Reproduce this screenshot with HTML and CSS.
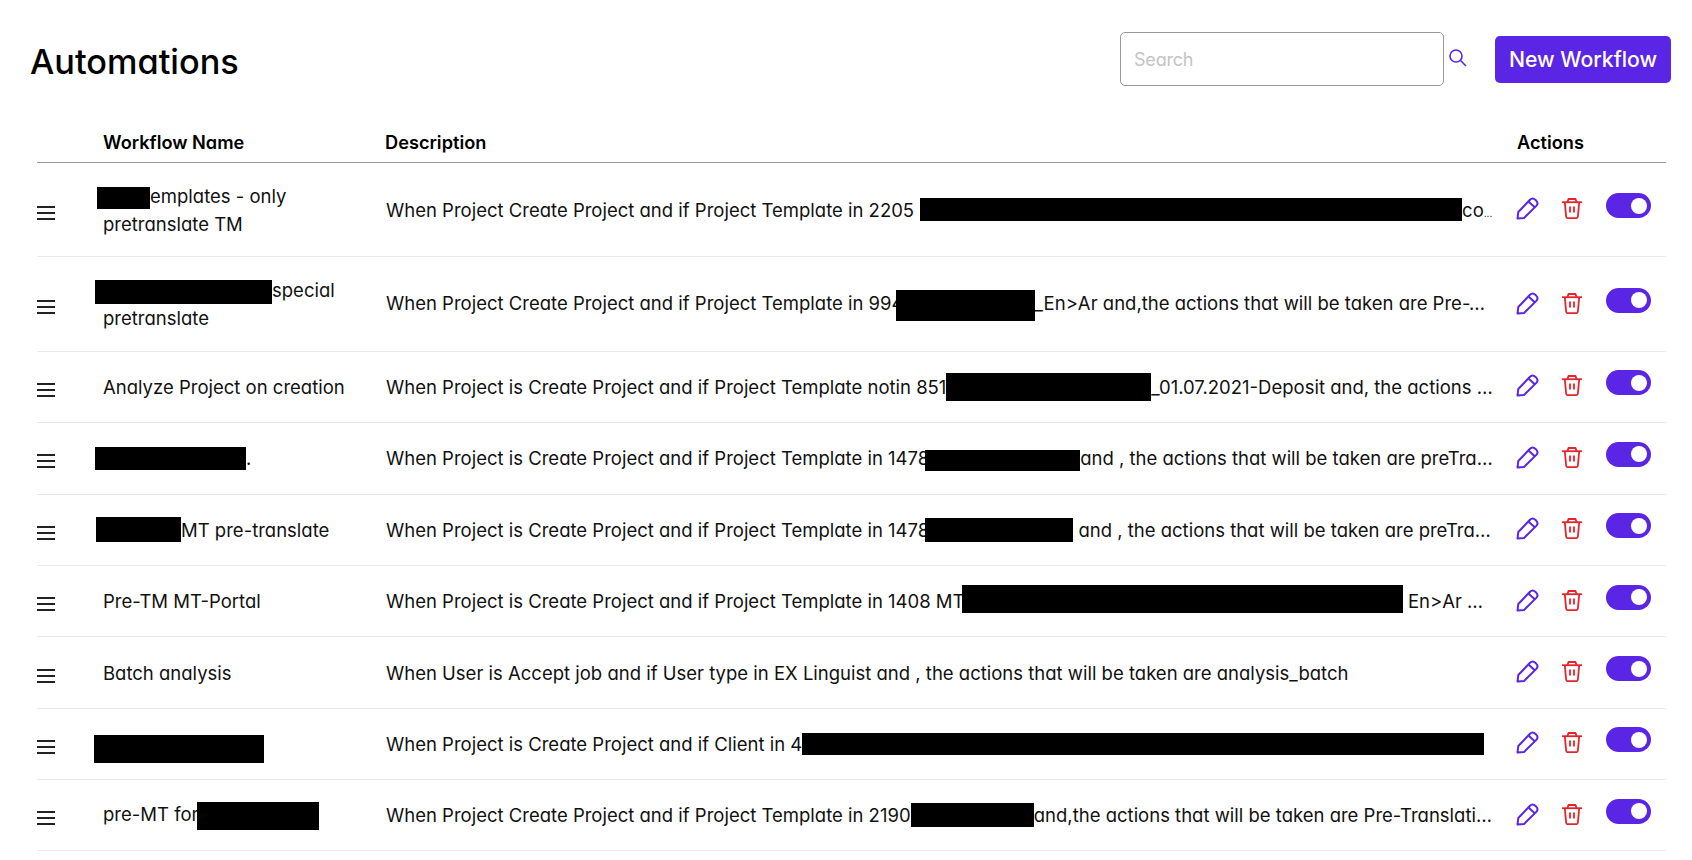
FILE: index.html
```html
<!DOCTYPE html>
<html lang="en">
<head>
    <meta charset="UTF-8">
    <title>Automations</title>
    <link rel="stylesheet" href="styles.css">
</head>
<body>
    <svg class="icon-defs" width="0" height="0">
        <symbol id="i-handle" viewBox="0 0 18 14"><path d="M0 1h18M0 7h18M0 13h18" fill="none" stroke="#222" stroke-width="2"/></symbol>
        <symbol id="i-pencil" viewBox="0 0 23 23"><g fill="none" stroke="#5b25e5" stroke-width="2" stroke-linejoin="round"><path d="M1.500 21.500l.8-6.500L14 2.800c1.500-1.500 3.800-1.500 5.300-.1l.9.9c1.500 1.500 1.500 3.800.1 5.300L8 21z"/><path d="M12.500 4.500l6.500 6"/></g></symbol>
        <symbol id="i-trash" viewBox="0 0 20 21"><g fill="none" stroke="#e5242a" stroke-width="1.800" stroke-linejoin="round"><path d="M0 4.200h20"/><path d="M5.500 4l1-3h7l1 3"/><path d="M2.800 4l1.300 14.500c.1 1 .8 1.700 1.800 1.700h8.200c1 0 1.700-.7 1.800-1.700L17.200 4"/><path d="M8 8.500v6M12 8.500v6"/></g></symbol>
    </svg>

    <div class="top-bar">
        <h1>Automations</h1>
        <div class="top-tools">
            <input type="text" class="search-input" placeholder="Search">
            <svg class="search-icon" viewBox="0 0 18 18"><circle cx="7" cy="7" r="6" fill="none" stroke="#5b25e5" stroke-width="1.600"/><path d="M11.500 11.500L17 17" fill="none" stroke="#5b25e5" stroke-width="1.600"/></svg>
            <button type="button" class="new-btn">New Workflow</button>
        </div>
    </div>

    <div class="table">
        <div class="row head">
            <div></div>
            <div>Workflow Name</div>
            <div>Description</div>
            <div>Actions</div>
        </div>

        <div class="row">
            <svg class="handle"><use href="#i-handle"/></svg>
            <div class="name"><span class="mask n1"></span>emplates - only pretranslate TM</div>
            <div class="desc">When Project Create Project and if Project Template in 2205 (<span class="mask d1"></span>co<span class="dots">...</span></div>
            <div class="actions">
                <svg class="pencil"><use href="#i-pencil"/></svg>
                <svg class="trash"><use href="#i-trash"/></svg>
                <span class="toggle"></span>
            </div>
        </div>

        <div class="row">
            <svg class="handle"><use href="#i-handle"/></svg>
            <div class="name"><span class="mask n2"></span>special pretranslate</div>
            <div class="desc">When Project Create Project and if Project Template in 994<span class="mask d2"></span>_En&gt;Ar and,the actions that will be taken are Pre-Translate</div>
            <div class="actions">
                <svg class="pencil"><use href="#i-pencil"/></svg>
                <svg class="trash"><use href="#i-trash"/></svg>
                <span class="toggle"></span>
            </div>
        </div>

        <div class="row">
            <svg class="handle"><use href="#i-handle"/></svg>
            <div class="name">Analyze Project on creation</div>
            <div class="desc">When Project is Create Project and if Project Template notin 851<span class="mask d3"></span>_01.07.2021-Deposit and, the actions that will be taken</div>
            <div class="actions">
                <svg class="pencil"><use href="#i-pencil"/></svg>
                <svg class="trash"><use href="#i-trash"/></svg>
                <span class="toggle"></span>
            </div>
        </div>

        <div class="row">
            <svg class="handle"><use href="#i-handle"/></svg>
            <div class="name"><span class="mask n4"></span>.</div>
            <div class="desc">When Project is Create Project and if Project Template in 1478<span class="mask d4"></span>and , the actions that will be taken are preTranslate</div>
            <div class="actions">
                <svg class="pencil"><use href="#i-pencil"/></svg>
                <svg class="trash"><use href="#i-trash"/></svg>
                <span class="toggle"></span>
            </div>
        </div>

        <div class="row">
            <svg class="handle"><use href="#i-handle"/></svg>
            <div class="name"><span class="mask n5"></span>MT pre-translate</div>
            <div class="desc">When Project is Create Project and if Project Template in 1478<span class="mask d5"></span> and , the actions that will be taken are preTranslate</div>
            <div class="actions">
                <svg class="pencil"><use href="#i-pencil"/></svg>
                <svg class="trash"><use href="#i-trash"/></svg>
                <span class="toggle"></span>
            </div>
        </div>

        <div class="row">
            <svg class="handle"><use href="#i-handle"/></svg>
            <div class="name">Pre-TM MT-Portal</div>
            <div class="desc">When Project is Create Project and if Project Template in 1408 MT-<span class="mask d6"></span> En&gt;Ar and, the actions</div>
            <div class="actions">
                <svg class="pencil"><use href="#i-pencil"/></svg>
                <svg class="trash"><use href="#i-trash"/></svg>
                <span class="toggle"></span>
            </div>
        </div>

        <div class="row">
            <svg class="handle"><use href="#i-handle"/></svg>
            <div class="name">Batch analysis</div>
            <div class="desc">When User is Accept job and if User type in EX Linguist and , the actions that will be taken are analysis_batch</div>
            <div class="actions">
                <svg class="pencil"><use href="#i-pencil"/></svg>
                <svg class="trash"><use href="#i-trash"/></svg>
                <span class="toggle"></span>
            </div>
        </div>

        <div class="row">
            <svg class="handle"><use href="#i-handle"/></svg>
            <div class="name"><span class="mask n8"></span></div>
            <div class="desc">When Project is Create Project and if Client in 4<span class="mask d8"></span></div>
            <div class="actions">
                <svg class="pencil"><use href="#i-pencil"/></svg>
                <svg class="trash"><use href="#i-trash"/></svg>
                <span class="toggle"></span>
            </div>
        </div>

        <div class="row">
            <svg class="handle"><use href="#i-handle"/></svg>
            <div class="name">pre-MT for<span class="mask n9"></span></div>
            <div class="desc">When Project Create Project and if Project Template in 2190 <span class="mask d9"></span>and,the actions that will be taken are Pre-Translation</div>
            <div class="actions">
                <svg class="pencil"><use href="#i-pencil"/></svg>
                <svg class="trash"><use href="#i-trash"/></svg>
                <span class="toggle"></span>
            </div>
        </div>
    </div>
</body>
</html>
```

FILE: styles.css
```css
body {
    font-family: 'Inter', 'Lato', sans-serif;
    font-feature-settings: "cv11";
    font-size: 18.5px;
    color: #111;
    background: #fff;
    margin: 0;
}

.icon-defs {
    position: absolute;
}

.top-bar {
    display: flex;
    justify-content: space-between;
    align-items: center;
    padding: 32px 21px 0 30px;
}

h1 {
    font-size: 34.3px;
    font-weight: 500;
    color: #000;
    margin: 4px 0 0;
}

.top-tools {
    display: flex;
    align-items: center;
}

.search-input {
    box-sizing: border-box;
    width: 324px;
    height: 54px;
    padding: 0 13px;
    border: 1px solid #999;
    border-radius: 5px;
    font-family: inherit;
    font-feature-settings: inherit;
    font-size: 18px;
    letter-spacing: -0.2px;
}

.search-input::placeholder {
    color: #c4c4c4;
}

.search-icon {
    width: 18px;
    height: 18px;
    margin: 0 28px 2px 5px;
}

.new-btn {
    width: 176px;
    height: 47px;
    background: #5b25e5;
    color: #fff;
    border: none;
    border-radius: 5px;
    font-family: inherit;
    font-feature-settings: inherit;
    font-size: 21.2px;
    font-weight: 500;
    cursor: pointer;
}

.table {
    margin: 0 26px 0 37px;
}

.row {
    display: grid;
    grid-template-columns: 66px 282px 1fr 149px;
    align-items: center;
    box-sizing: border-box;
    min-height: 71.4px;
    padding: 18.7px 0;
    border-bottom: 1px solid #eaeaea;
    line-height: 28px;
}

.row.head {
    min-height: 0;
    padding: 42px 0 6px;
    border-bottom-color: #999;
    font-size: 18.2px;
    font-weight: 600;
    color: #000;
}

.handle {
    width: 18px;
    height: 14px;
    margin-top: 6px;
}

.name {
    padding-right: 30px;
}

.desc {
    margin-right: 24px;
    margin-left: 1px;
    line-height: 32px;
    white-space: nowrap;
    overflow: hidden;
    text-overflow: ellipsis;
}

.dots {
    font-size: 10px;
    line-height: 1;
}

.actions {
    display: flex;
    align-items: center;
    gap: 23px;
}

.pencil {
    width: 23px;
    height: 23px;
    margin-bottom: 2px;
    margin-left: -1px;
}

.trash {
    width: 20px;
    height: 21px;
    margin-bottom: 2px;
}

.toggle {
    position: relative;
    width: 45px;
    height: 25px;
    margin-bottom: 8px;
    margin-left: 1px;
    border-radius: 13px;
    background: #5b25e5;
}

.toggle::after {
    content: "";
    position: absolute;
    top: 4.500px;
    right: 4px;
    width: 16px;
    height: 16px;
    border-radius: 50%;
    background: #fff;
}

/* black boxes over the private parts of the names */
.mask {
    display: inline-block;
    height: 24px;
    background: #000;
    vertical-align: middle;
}

.n1 { width: 53px; height: 22px; margin-left: -6px; }
.n2 { width: 177px; margin-left: -8px; }
.n4 { width: 151px; height: 23px; margin-left: -8px; transform: translateY(-2px); }
.n5 { width: 85px; height: 25px; margin-left: -7px; transform: translateY(-2px); }
.n8 { width: 170px; height: 28px; margin-left: -9px; transform: translateY(4px); }
.n9 { width: 122px; height: 28px; margin-left: -2px; }

.d1 { width: 542px; height: 23px; margin-left: -6px; transform: translateY(-2px); }
.d2 { width: 139px; height: 31px; margin-left: -8px; }
.d3 { width: 205px; height: 28px; transform: translateY(-2px); }
.d4 { width: 155px; height: 21px; margin-left: -4px; }
.d5 { width: 148px; height: 24px; margin-left: -4px; transform: translateY(-2px); }
.d6 { width: 441px; height: 28px; margin-left: -10px; transform: translateY(-4px); }
.d8 { width: 682px; height: 22px; transform: translateY(-2px); }
.d9 { width: 123px; height: 24px; margin-left: -5px; transform: translateY(-2px); }
```
